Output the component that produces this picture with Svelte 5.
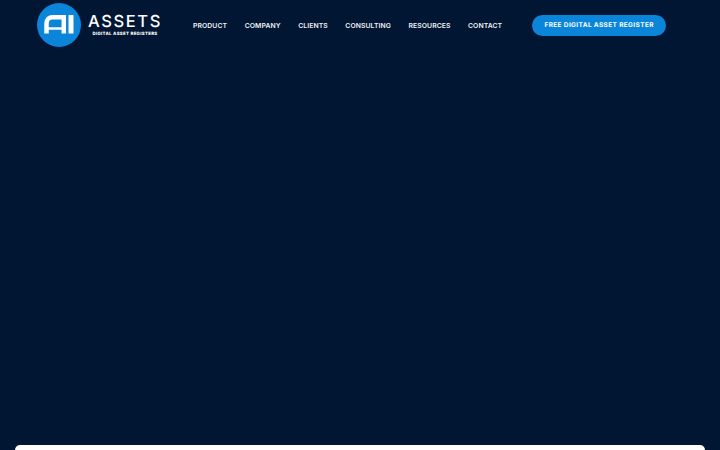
<script lang="ts">
	const links = ['Product', 'Company', 'Clients', 'Consulting', 'Resources', 'Contact'];
</script>

<div class="page">
	<header>
		<a class="logo" href="#top">
			<svg class="mark" viewBox="0 0 44 44" aria-hidden="true">
				<circle cx="22" cy="22" r="22" fill="#0a85d9" />
				<path
					d="M9.500 30.500V20.500c0-4 2.400-6.200 6-6.200H26.800V30.500"
					fill="none"
					stroke="#fff"
					stroke-width="4.500"
				/>
				<path d="M9.500 25.500H26.800" fill="none" stroke="#fff" stroke-width="2.500" />
				<path d="M34 12v18.500" fill="none" stroke="#fff" stroke-width="5" />
			</svg>
			<span class="wordmark">
				<span class="name">ASSETS</span>
				<span class="tag">DIGITAL ASSET REGISTERS</span>
			</span>
		</a>
		<nav>
			{#each links as link}
				<a href="#top">{link}</a>
			{/each}
		</nav>
		<a class="cta" href="#top">Free Digital Asset Register</a>
	</header>
	<main></main>
	<div class="card"></div>
</div>

<style>
	:global(body) {
		margin: 0;
		background: #011633;
		overflow: hidden;
	}

	.page {
		height: 450px;
		display: flex;
		flex-direction: column;
		background: #011633;
		font-family: 'Inter', 'Liberation Sans', sans-serif;
		text-rendering: geometricPrecision;
		overflow: hidden;
	}

	header {
		display: flex;
		align-items: center;
		height: 51px;
		padding-left: 37px;
		flex-shrink: 0;
	}

	a {
		color: #fff;
		text-decoration: none;
	}

	.logo {
		display: flex;
		align-items: center;
		gap: 7px;
		width: 156px;
		margin-bottom: 1px;
	}

	.mark {
		width: 44px;
		height: 44px;
		flex-shrink: 0;
	}

	.wordmark {
		display: flex;
		flex-direction: column;
		align-items: center;
		width: 74px;
	}

	.name {
		font-size: 16.5px;
		font-weight: 500;
		letter-spacing: 1.6px;
		line-height: 18px;
		margin-top: 1px;
	}

	.tag {
		font-size: 4.4px;
		font-weight: 800;
		letter-spacing: 0.28px;
		line-height: 8px;
		margin-top: 1px;
		white-space: nowrap;
	}

	nav {
		display: flex;
		gap: 17.5px;
		margin-right: 30px;
	}

	nav a {
		font-size: 6.8px;
		font-weight: 600;
		letter-spacing: 0.1px;
		text-transform: uppercase;
		color: #eef1f5;
		white-space: nowrap;
	}

	.cta {
		display: block;
		width: 134px;
		height: 21px;
		line-height: 21px;
		text-align: center;
		border-radius: 11px;
		background: #0a85d9;
		font-size: 6.5px;
		font-weight: 700;
		letter-spacing: 0.37px;
		text-transform: uppercase;
		white-space: nowrap;
	}

	main {
		flex: 1;
	}

	.card {
		height: 5px;
		margin: 0 15px;
		flex-shrink: 0;
		background: #fff;
		border-radius: 12px 12px 0 0;
	}
</style>
